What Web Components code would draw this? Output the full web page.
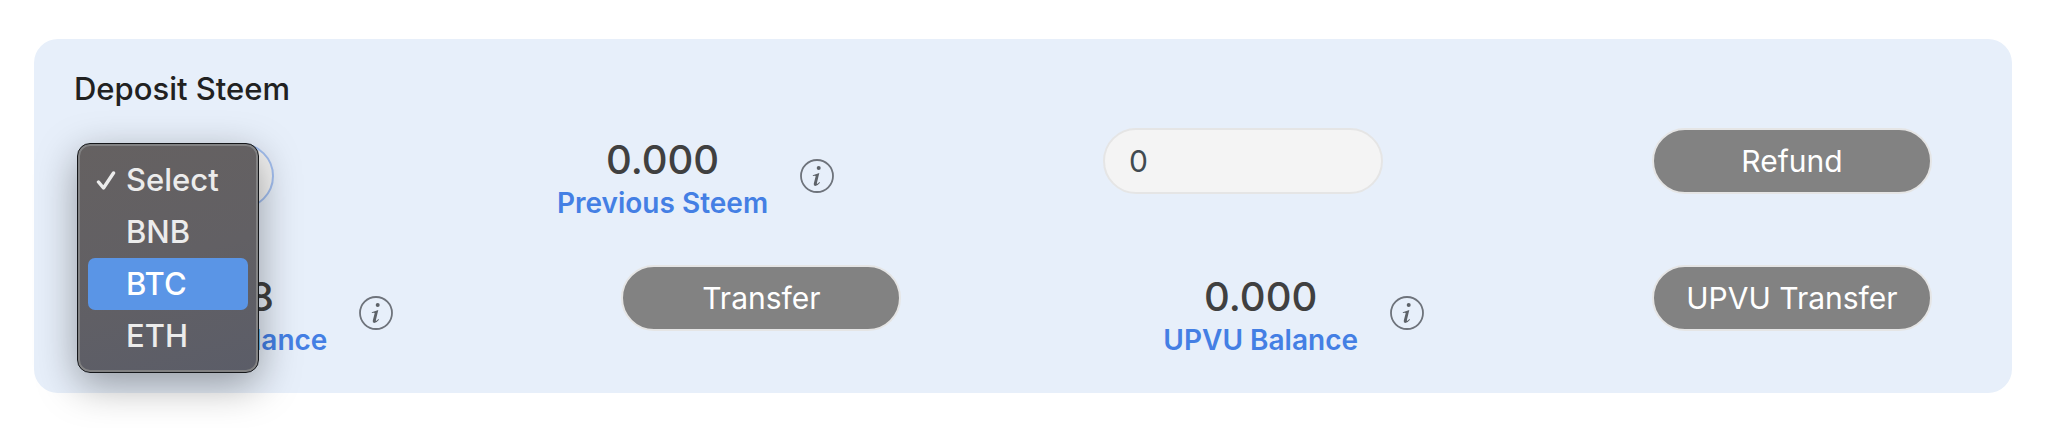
<!DOCTYPE html>
<html lang="en">
<head>
<meta charset="utf-8">
<meta name="viewport" content="width=device-width, initial-scale=1">
<title>Deposit Steem</title>
<style>
  body {
    margin: 0;
    padding: 39px 42px 36px 34px;
    background: #fff;
    color: #212121;
    font-family: Inter, "Liberation Sans", sans-serif;
  }
</style>
</head>
<body>
<deposit-card>
  <span slot="title">Deposit Steem</span>
  <card-row>
    <coin-picker></coin-picker>
    <balance-metric class="near" value="0.000">Previous Steem</balance-metric>
    <amount-field></amount-field>
    <pill-button>Refund</pill-button>
  </card-row>
  <card-row class="inset">
    <balance-metric value="1.008">STEEM Balance</balance-metric>
    <pill-button>Transfer</pill-button>
    <balance-metric class="far" value="0.000">UPVU Balance</balance-metric>
    <pill-button>UPVU Transfer</pill-button>
  </card-row>
</deposit-card>

<script>
  class BaseElement extends HTMLElement {
    connectedCallback() {
      if (this.shadowRoot) return;
      this.attachShadow({ mode: "open" }).innerHTML = this.render();
    }
  }

  customElements.define("deposit-card", class extends BaseElement {
    render() {
      return `<style>
        :host { display: block; box-sizing: border-box; padding: 26px 80px 37px 40px; background: #e7effa; border-radius: 24px; }
        h2 { margin: 0 0 15px; font-size: 31px; line-height: 48px; font-weight: 500; }
        .rows { display: flex; flex-direction: column; gap: 46px; }
      </style>
      <h2><slot name="title"></slot></h2>
      <div class="rows"><slot></slot></div>`;
    }
  });

  customElements.define("card-row", class extends BaseElement {
    render() {
      return `<style>
        :host { display: flex; justify-content: space-between; align-items: flex-start; }
        :host(.inset) { padding-left: 42px; }
        ::slotted(.near) { margin-left: 14px; }
        ::slotted(.far) { margin-left: 34px; }
      </style><slot></slot>`;
    }
  });

  customElements.define("balance-metric", class extends BaseElement {
    render() {
      return `<style>
        :host { display: flex; align-items: center; gap: 32px; padding-top: 4px; }
        .text { text-align: center; white-space: nowrap; }
        .value { font-size: 40px; line-height: 56px; font-weight: 500; color: #404040; }
        .label { font-size: 28px; line-height: 31px; font-weight: 600; color: #447fe4; }
        svg { display: block; flex: none; }
      </style>
      <div class="text">
        <div class="value">${this.getAttribute("value")}</div>
        <div class="label"><slot></slot></div>
      </div>
      <svg width="34" height="34" viewBox="0 0 34 34" aria-hidden="true">
        <circle cx="17" cy="17" r="16" fill="none" stroke="#6e737b" stroke-width="1.8"/>
        <circle cx="18.7" cy="9" r="2" fill="#5d6268"/>
        <path d="M12.8 16.2 19.3 14 16.9 24Q16.7 25.2 17.6 24.7L19.4 23.1 20 23.8Q17.5 27 15.2 27 13.3 26.9 13.8 24.6L15.6 17.5Q15.8 16.7 14.8 16.8L12.9 17.1Z" fill="#5d6268"/>
      </svg>`;
    }
  });

  customElements.define("pill-button", class extends BaseElement {
    render() {
      return `<style>
        :host { display: block; flex: none; width: 280px; }
        button { display: block; box-sizing: border-box; width: 100%; height: 66px; padding: 0; border: 2px solid #e5e5e5; border-radius: 33px; background: #828282; color: #fff; font: 400 30px/40px Inter, "Liberation Sans", sans-serif; white-space: nowrap; }
      </style><button type="button"><slot></slot></button>`;
    }
  });

  customElements.define("amount-field", class extends BaseElement {
    render() {
      return `<style>
        :host { display: block; flex: none; width: 280px; }
        input { display: block; box-sizing: border-box; width: 100%; height: 66px; margin: 0; padding: 0 24px; border: 2px solid #e5e5e5; border-radius: 33px; outline: 0; background: #f4f4f4; color: #414a50; font: 400 30px/40px Inter, "Liberation Sans", sans-serif; }
      </style><input type="text" inputmode="decimal" aria-label="Amount" value="0">`;
    }
  });

  customElements.define("coin-picker", class extends BaseElement {
    render() {
      return `<style>
        :host { display: block; position: relative; box-sizing: border-box; flex: none; width: 200px; padding: 15px 0 0 6px; }
        select { display: block; box-sizing: border-box; appearance: none; width: 100%; height: 66px; margin: 0; padding: 0 24px; border: 2px solid #a3bff0; border-radius: 33px; background: #f4f4f4; color: #414a50; font: 400 30px/40px Inter, "Liberation Sans", sans-serif; }
        ul { position: absolute; z-index: 1; top: 15px; left: 3px; box-sizing: border-box; width: 182px; margin: 0; padding: 10px; list-style: none; border: 1px solid #15171a; border-radius: 13px; background: linear-gradient(165deg, #656161, #626064 50%, #5b5d68); box-shadow: inset 0 0 0 2px #828283, 0 12px 40px rgba(0, 0, 0, .36); color: #ececec; font-size: 31px; line-height: 52px; font-weight: 500; }
        li { display: grid; grid-template-columns: 38px 1fr; align-items: center; height: 52px; border-radius: 7px; white-space: nowrap; }
        li::before { content: ""; }
        li.checked::before { display: none; }
        li.active { background: #5a95e6; color: #fff; }
        svg { display: block; margin-left: 8px; }
      </style>
      <select aria-label="Coin"><option>Select</option><option>BNB</option><option>BTC</option><option>ETH</option></select>
      <ul role="listbox" aria-label="Coin options">
        <li class="checked" role="option" aria-selected="true"><svg width="20" height="20" viewBox="0 0 20 20" aria-hidden="true"><path d="M2.5 12 7.5 18 17.5 3" fill="none" stroke="#ececec" stroke-width="3.4" stroke-linecap="round" stroke-linejoin="round"/></svg>Select</li>
        <li role="option" aria-selected="false">BNB</li>
        <li class="active" role="option" aria-selected="false">BTC</li>
        <li role="option" aria-selected="false">ETH</li>
      </ul>`;
    }
  });
</script>
</body>
</html>
